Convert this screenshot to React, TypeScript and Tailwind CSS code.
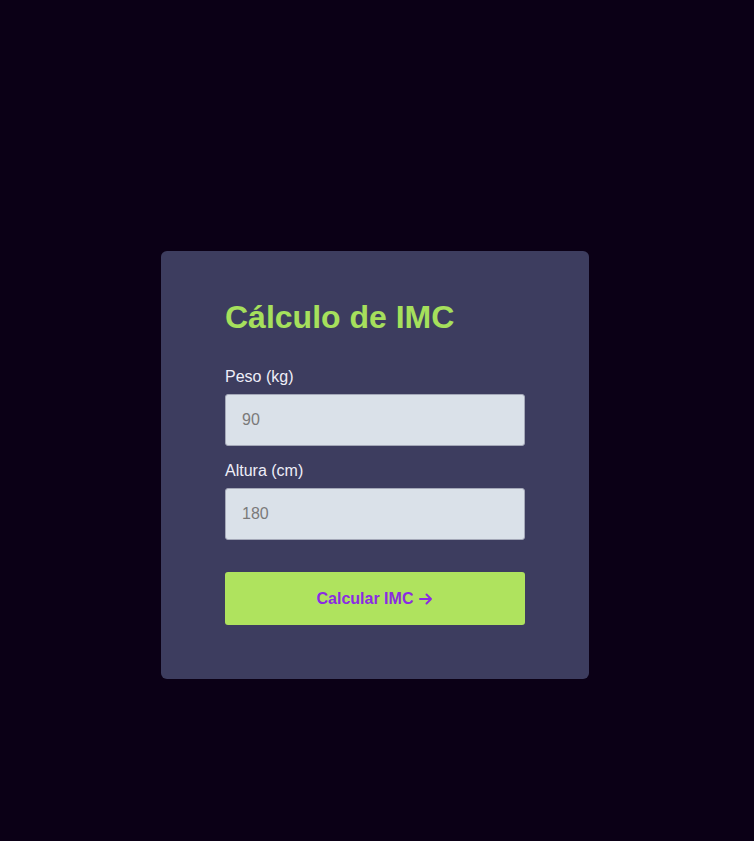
export default function App() {
  return (
    <div
      className="min-h-[841px] w-full bg-[#0b0016] flex justify-center pr-1 pt-[251px]"
      style={{ fontFamily: '"Liberation Sans", Arial, sans-serif' }}
    >
      <div className="w-[428px] h-[428px] bg-[#3d3d5f] rounded-md px-16 pt-[48px]">
        <h1 className="text-[32px] leading-[36px] font-bold text-[#a6e05c]">Cálculo de IMC</h1>
        <div className="mt-[29px] flex flex-col">
          <label className="pt-[1px] text-base leading-6 text-[#eeeef8]">Peso (kg)</label>
          <input
            type="number"
            placeholder="90"
            className="mt-[5px] h-[52px] w-[300px] rounded-[3px] border border-[#a4a8b8] bg-[#dae1e9] px-4 text-base text-[#333] placeholder:text-[#7a7a7a] outline-none"
          />
          <label className="mt-3 pt-[1px] text-base leading-6 text-[#eeeef8]">Altura (cm)</label>
          <input
            type="number"
            placeholder="180"
            className="mt-[5px] h-[52px] w-[300px] rounded-[3px] border border-[#a4a8b8] bg-[#dae1e9] px-4 text-base text-[#333] placeholder:text-[#7a7a7a] outline-none"
          />
          <button className="mt-8 h-[53px] w-[300px] rounded-[3px] bg-[#afe35e] text-base font-bold text-[#8a2be2] flex items-center justify-center gap-[6px]">
            <span>Calcular IMC</span>
            <svg width="14" height="12" viewBox="0 0 14 12" fill="none" className="mt-[1px]">
              <path d="M1 6h11M7.5 1.5L12 6l-4.5 4.5" stroke="#8a2be2" strokeWidth="2" strokeLinecap="round" strokeLinejoin="round" />
            </svg>
          </button>
        </div>
      </div>
    </div>
  );
}
